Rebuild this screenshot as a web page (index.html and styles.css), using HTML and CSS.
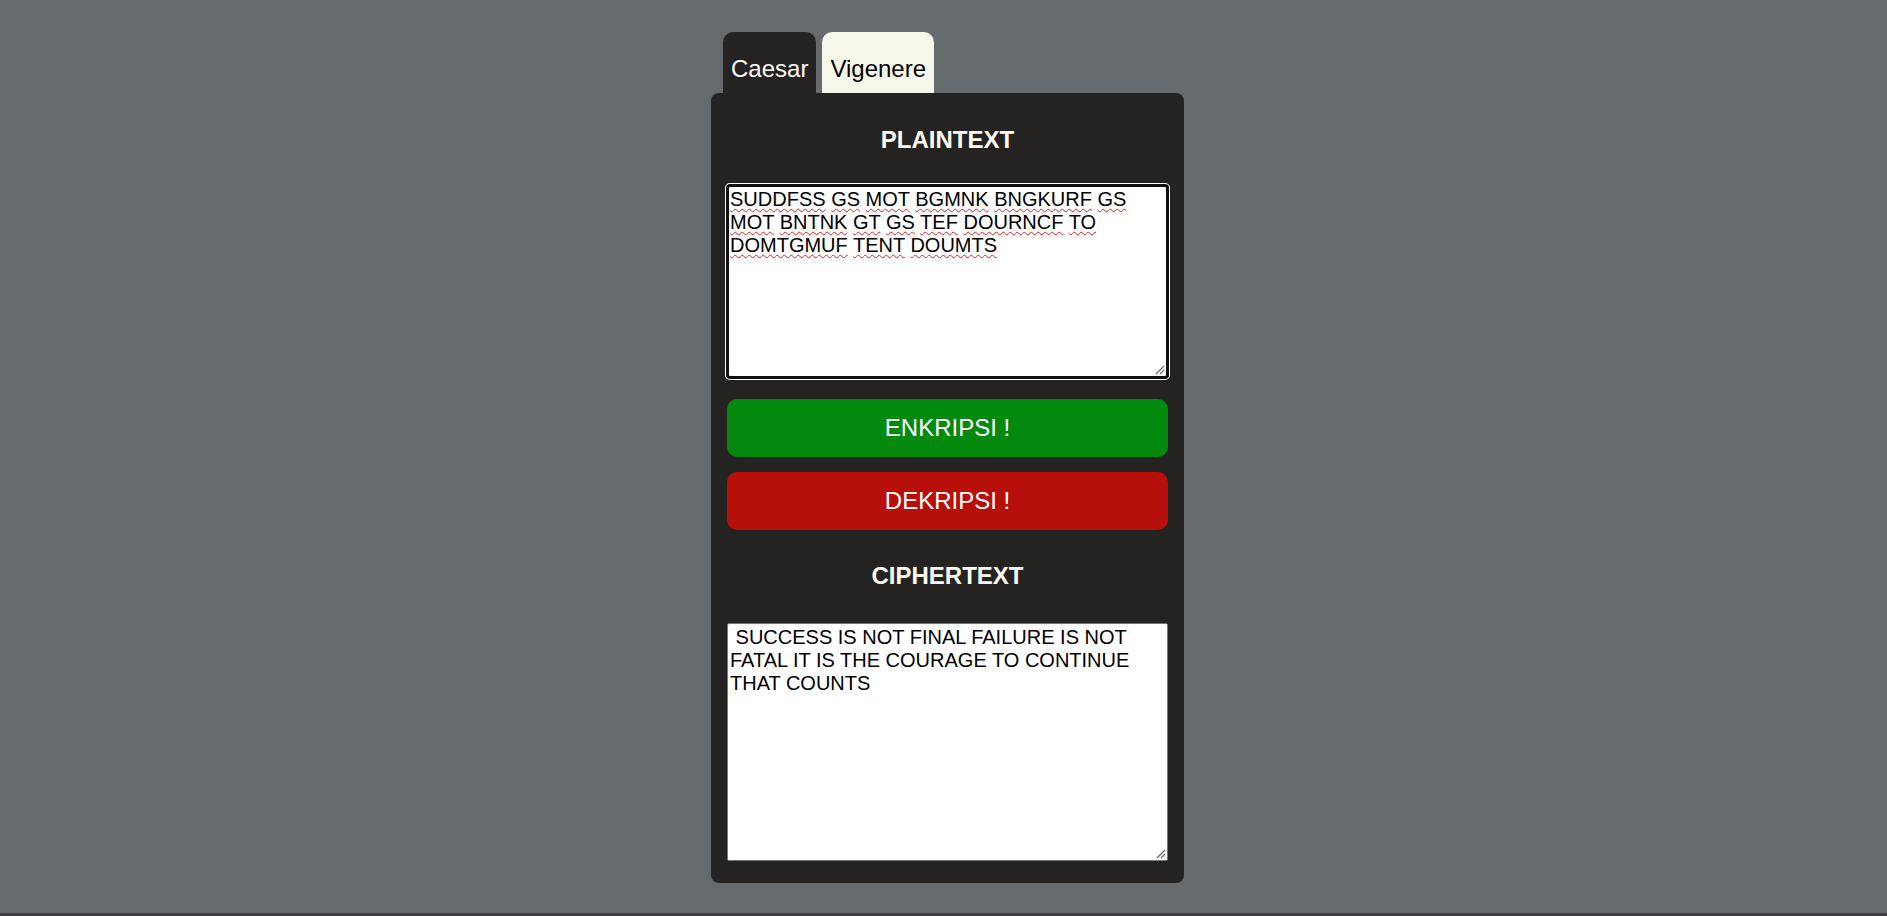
FILE: index.html
```html
<!DOCTYPE html>
<html lang="id">
<head>
<meta charset="utf-8">
<title>Caesar Cipher</title>
<link rel="stylesheet" href="styles.css">
</head>
<body>
<div class="page">
  <div class="app">
    <nav class="tabs">
      <div class="tab tab-active">Caesar</div>
      <div class="tab tab-light">Vigenere</div>
    </nav>
    <main class="panel">
      <h2 class="heading">PLAINTEXT</h2>
      <div class="field field-focus">
        <div class="field-text"><span class="sq">SUDDFSS</span> <span class="sq">GS</span> <span class="sq">MOT</span> <span class="sq">BGMNK</span> <span class="sq">BNGKURF</span> <span class="sq">GS</span> <span class="sq">MOT</span> <span class="sq">BNTNK</span> <span class="sq">GT</span> <span class="sq">GS</span> <span class="sq">TEF</span> <span class="sq">DOURNCF</span> <span class="sq">TO</span> <span class="sq">DOMTGMUF</span> <span class="sq">TENT</span> <span class="sq">DOUMTS</span></div>
        <svg class="grip" width="10" height="10" viewBox="0 0 10 10"><path d="M1 9 L9 1 M5 9 L9 5" stroke="#6b6b6b" stroke-width="1.2" fill="none"/></svg>
      </div>
      <button class="btn btn-green">ENKRIPSI !</button>
      <button class="btn btn-red">DEKRIPSI !</button>
      <h2 class="heading heading-2">CIPHERTEXT</h2>
      <div class="field field-plain">
        <div class="field-text"> SUCCESS IS NOT FINAL FAILURE IS NOT FATAL IT IS THE COURAGE TO CONTINUE THAT COUNTS</div>
        <svg class="grip" width="10" height="10" viewBox="0 0 10 10"><path d="M1 9 L9 1 M5 9 L9 5" stroke="#6b6b6b" stroke-width="1.2" fill="none"/></svg>
      </div>
    </main>
  </div>
</div>
<div class="bottom-bar"></div>
</body>
</html>
```

FILE: styles.css
```css
html, body {
  margin: 0;
  padding: 0;
}
body {
  background: #676a6d;
  font-family: "Liberation Sans", Arial, sans-serif;
}
.page {
  height: 913px;
  display: flex;
  justify-content: center;
  padding-left: 8px;
  box-sizing: border-box;
}
.bottom-bar {
  height: 3px;
  background: #3d3e40;
}
.app {
  width: 473px;
  padding-top: 32px;
  display: flex;
  flex-direction: column;
}
.tabs {
  display: flex;
  gap: 6px;
  margin-left: 12px;
}
.tab {
  height: 61px;
  box-sizing: border-box;
  padding: 23px 8px 0 8px;
  font-size: 24px;
  line-height: 28px;
  border-radius: 10px 10px 0 0;
}
.tab-active {
  background: #242321;
  color: #ffffff;
}
.tab-light {
  background: #f8f7ec;
  color: #000000;
}
.panel {
  background: #242321;
  border-radius: 8px;
  padding: 16px 16px 22px 16px;
  display: flex;
  flex-direction: column;
}
.heading {
  margin: 17px 0 0 0;
  font-size: 24px;
  line-height: 28px;
  font-weight: bold;
  text-align: center;
  color: #fdfcf2;
}
.heading-2 {
  margin-top: 32px;
}
.field {
  position: relative;
  background: #ffffff;
  box-sizing: border-box;
  border: 1px solid #767676;
  border-radius: 2px;
  padding: 2px;
  font-size: 20px;
  line-height: 23px;
  color: #000000;
}
.field-text {
  white-space: pre-wrap;
}
.field-focus {
  margin-top: 31px;
  height: 193px;
  border: 2px solid #101010;
  padding: 1px;
  border-radius: 3px;
  box-shadow: 0 0 0 1px #101010, 0 0 0 2px #ffffff;
}
.field-plain {
  margin-top: 33px;
  height: 238px;
}
.sq {
  text-decoration: underline wavy #ee1c1c;
  text-decoration-thickness: 1px;
  text-underline-offset: 2px;
}
.grip {
  position: absolute;
  right: 1px;
  bottom: 1px;
}
.btn {
  display: block;
  width: 100%;
  height: 58px;
  border: none;
  border-radius: 10px;
  font-family: "Liberation Sans", Arial, sans-serif;
  font-size: 24px;
  color: #ffffff;
  padding: 0;
}
.btn-green {
  margin-top: 21px;
  background: #038a0e;
}
.btn-red {
  margin-top: 15px;
  background: #b70f0a;
}
```
